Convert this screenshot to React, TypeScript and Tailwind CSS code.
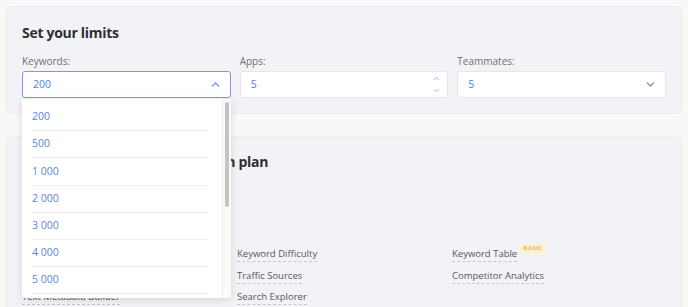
import { ChevronDown, ChevronUp } from "lucide-react";

const keywordOptions = ["200", "500", "1 000", "2 000", "3 000", "4 000", "5 000", "10 000"];

const features: { name: string; badge?: string }[] = [
  { name: "Keyword Research" },
  { name: "Keyword Difficulty" },
  { name: "Keyword Table", badge: "BASIC" },
  { name: "Reviews & Ratings" },
  { name: "Traffic Sources" },
  { name: "Competitor Analytics" },
  { name: "Text Metadata Builder" },
  { name: "Search Explorer" },
];

function Feature({ name, badge }: { name: string; badge?: string }) {
  return (
    <div className="flex items-start gap-[3px]">
      <span className="border-b border-dashed border-[#c8c8d0] text-[9.5px] leading-[15px] text-[#555566]">
        {name}
      </span>
      {badge && (
        <span className="mt-[-2px] rounded-[2px] bg-[#fdf0d5] px-[3px] text-[6px] font-bold leading-[9px] tracking-[0.4px] text-[#f2b450]">
          {badge}
        </span>
      )}
    </div>
  );
}

export default function App() {
  return (
    <div
      className="min-h-[307px] bg-[#f8f8f9] px-[6px] pt-[6px]"
      style={{ fontFamily: '"Open Sans", "Noto Sans", sans-serif' }}
    >
      <div className="rounded-[6px] border border-[#ebebf0] bg-[#f3f3f7] px-[15px] pt-[15px] pb-[15px]">
        <h2 className="text-[14px] font-bold leading-[22px] tracking-[-0.3px] text-[#2e2e33]">Set your limits</h2>
        <div className="mt-[7px] grid grid-cols-3 gap-[9px]">
          <div className="relative">
            <div className="text-[10px] leading-[20px] text-[#6f6f75]">Keywords:</div>
            <div className="flex h-[27px] items-center justify-between rounded-[3px] border border-[#7b9ae6] bg-white pl-[10px] pr-[8px]">
              <span className="text-[10.5px] text-[#4f7fdd]">200</span>
              <ChevronUp size={13} strokeWidth={2} className="text-[#5b85e0]" />
            </div>
            <div className="absolute left-0 right-0 top-[48px] z-10 flex h-[199px] overflow-hidden rounded-b-[3px] bg-white shadow-[0_2px_8px_rgba(0,0,0,0.12)]">
              <div className="flex-1 pl-[10px] pr-[13px] pt-[5px]">
                {keywordOptions.map((o) => (
                  <div
                    key={o}
                    className="flex h-[27.2px] items-center border-b border-[#efeff2] text-[10.5px] text-[#5a85e0]"
                  >
                    {o}
                  </div>
                ))}
              </div>
              <div className="w-[9px] border-l border-[#ececec] bg-[#fafafa] px-[2px] pt-[3px]">
                <div className="h-[105px] rounded-full bg-[#c3c3c3]" />
              </div>
            </div>
          </div>
          <div>
            <div className="text-[10px] leading-[20px] text-[#6f6f75]">Apps:</div>
            <div className="flex h-[27px] items-center justify-between rounded-[3px] border border-[#e6e6ec] bg-white pl-[10px] pr-[6px]">
              <span className="text-[10.5px] text-[#4f7fdd]">5</span>
              <div className="flex flex-col gap-[3px] text-[#7b9ae6]">
                <ChevronUp size={9} strokeWidth={2} />
                <ChevronDown size={9} strokeWidth={2} />
              </div>
            </div>
          </div>
          <div>
            <div className="text-[10px] leading-[20px] text-[#6f6f75]">Teammates:</div>
            <div className="flex h-[27px] items-center justify-between rounded-[3px] border border-[#e6e6ec] bg-white pl-[10px] pr-[8px]">
              <span className="text-[10.5px] text-[#4f7fdd]">5</span>
              <ChevronDown size={13} strokeWidth={2} className="text-[#5b85e0]" />
            </div>
          </div>
        </div>
      </div>

      <div className="mt-[22px] min-h-[180px] rounded-[6px] border border-[#ebebf0] bg-[#f3f3f7] px-[15px] pt-[14px]">
        <h2 className="text-[14px] font-bold leading-[22px] tracking-[-0.3px] text-[#2e2e33]">
          Features included in the chosen plan
        </h2>
        <div className="mt-[73px] grid grid-cols-3 gap-x-[1px] gap-y-[5.5px]">
          {features.map((f) => (
            <Feature key={f.name} name={f.name} badge={f.badge} />
          ))}
        </div>
      </div>
    </div>
  );
}
